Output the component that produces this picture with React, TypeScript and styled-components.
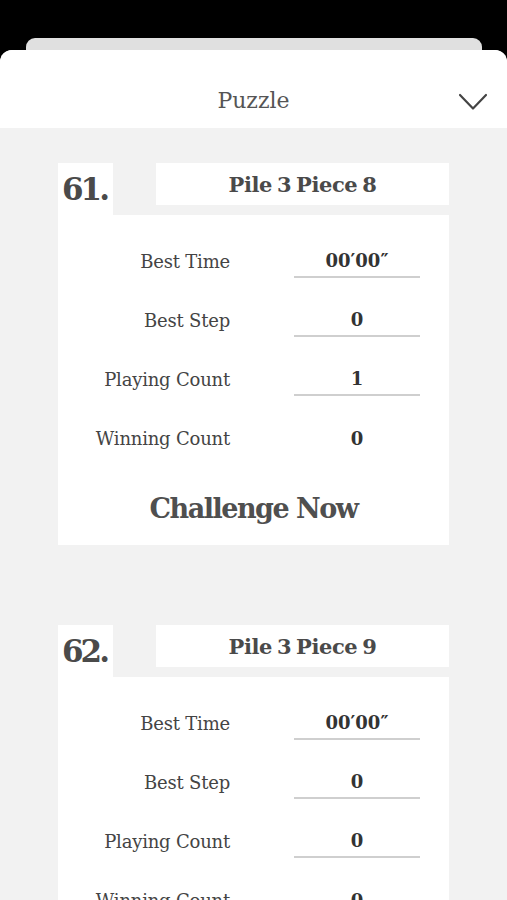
import styled, { createGlobalStyle } from 'styled-components'

const GlobalStyle = createGlobalStyle`
  html, body {
    margin: 0;
    padding: 0;
    background: #000;
    overflow: hidden;
  }
  * { box-sizing: border-box; }
`

const serif = `"DejaVu Serif", "Liberation Serif", serif`

const Page = styled.div`
  height: 900px;
  background: #000;
  display: flex;
  flex-direction: column;
  overflow: hidden;
  font-family: ${serif};
`

const BackSheet = styled.div`
  flex-shrink: 0;
  height: 12px;
  margin: 38px 25px 0 26px;
  background: #e0e0e0;
  border-radius: 9px 9px 0 0;
`

const Sheet = styled.div`
  flex: 1;
  min-height: 0;
  display: flex;
  flex-direction: column;
  border-radius: 12px 12px 0 0;
  overflow: hidden;
  background: #f2f2f2;
`

const Header = styled.div`
  flex-shrink: 0;
  height: 78px;
  background: #fff;
  display: flex;
  align-items: center;
  justify-content: center;
  position: relative;
  padding-top: 22px;
`

const HeaderTitle = styled.div`
  font-size: 22px;
  color: #555;
`

const CloseButton = styled.div`
  position: absolute;
  right: 19px;
  top: 43px;
  width: 30px;
  height: 18px;
  display: flex;
`

const List = styled.div`
  flex-shrink: 0;
  display: flex;
  flex-direction: column;
  gap: 80px;
  padding: 35px 58px 0;
`

const Card = styled.div`
  display: flex;
  flex-direction: column;
`

const CardHead = styled.div`
  display: flex;
  gap: 43px;
  height: 52px;
`

const NumberTab = styled.div`
  width: 55px;
  background: #fff;
  padding: 8px 0 0 4px;
  font-size: 31px;
  font-weight: bold;
  letter-spacing: -3px;
  color: #4a4a4a;
`

const TitleBox = styled.div`
  flex: 1;
  height: 42px;
  background: #fff;
  display: flex;
  align-items: center;
  justify-content: center;
  font-size: 21px;
  font-weight: bold;
  letter-spacing: -0.4px;
  word-spacing: -2px;
  color: #4a4a4a;
`

const CardBody = styled.div`
  background: #fff;
  padding: 29px 29px 20px 0;
  display: flex;
  flex-direction: column;
`

const Stats = styled.div`
  display: grid;
  grid-template-columns: 1fr 126px;
  column-gap: 64px;
  row-gap: 25px;
`

const Label = styled.div`
  height: 34px;
  display: flex;
  align-items: center;
  justify-content: flex-end;
  font-size: 18px;
  letter-spacing: -0.2px;
  color: #444;
  white-space: nowrap;
`

const Value = styled.div<{ $last?: boolean }>`
  height: 34px;
  display: flex;
  align-items: center;
  justify-content: center;
  font-size: 18px;
  font-weight: bold;
  color: #333;
  border-bottom: ${({ $last }) => ($last ? 'none' : '2px solid #cfcfcf')};
`

const ChallengeButton = styled.div`
  margin: 36px 0 0 29px;
  height: 34px;
  display: flex;
  align-items: center;
  justify-content: center;
  font-size: 27px;
  font-weight: bold;
  letter-spacing: -1.5px;
  color: #4f4f4f;
`

const puzzles = [
  { no: 61, name: 'Pile 3 Piece 8', time: '00′00″', step: 0, playing: 1, winning: 0 },
  { no: 62, name: 'Pile 3 Piece 9', time: '00′00″', step: 0, playing: 0, winning: 0 },
]

function PuzzleCard({ p }: { p: typeof puzzles[number] }) {
  const rows = [
    ['Best Time', p.time],
    ['Best Step', p.step],
    ['Playing Count', p.playing],
    ['Winning Count', p.winning],
  ]
  return (
    <Card>
      <CardHead>
        <NumberTab>{p.no}.</NumberTab>
        <TitleBox>{p.name}</TitleBox>
      </CardHead>
      <CardBody>
        <Stats>
          {rows.map(([label, value], i) => [
            <Label key={'l' + i}>{label}</Label>,
            <Value key={'v' + i} $last={i === rows.length - 1}>{value}</Value>,
          ])}
        </Stats>
        <ChallengeButton>Challenge Now</ChallengeButton>
      </CardBody>
    </Card>
  )
}

export default function App() {
  return (
    <Page>
      <GlobalStyle />
      <BackSheet />
      <Sheet>
        <Header>
          <HeaderTitle>Puzzle</HeaderTitle>
          <CloseButton>
            <svg width="30" height="18" viewBox="0 0 30 18">
              <polyline points="2,2 15,15.5 28,2" fill="none" stroke="#444" strokeWidth="2.2" strokeLinecap="round" strokeLinejoin="round" />
            </svg>
          </CloseButton>
        </Header>
        <List>
          {puzzles.map((p) => (
            <PuzzleCard key={p.no} p={p} />
          ))}
        </List>
      </Sheet>
    </Page>
  )
}
